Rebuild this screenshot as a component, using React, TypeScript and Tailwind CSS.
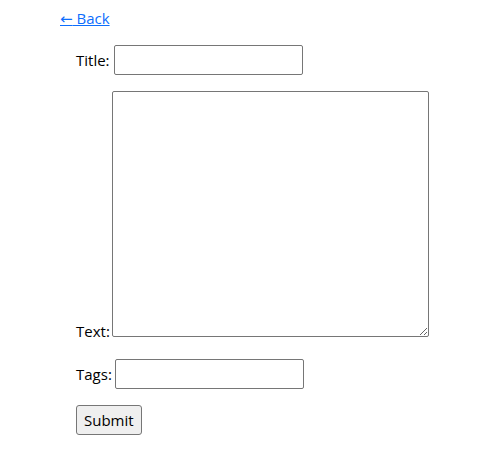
export default function App() {
  return (
    <div className="min-h-[469px] bg-white pl-[60px] pt-[7px] font-['Open_Sans','Segoe_UI',sans-serif] text-[15px] leading-[22px] text-black">
      <a href="#" className="text-[#0d6efd] underline">
        <span className="font-['DejaVu_Sans',sans-serif] text-[15px] leading-none">←</span> Back
      </a>

      <form className="mt-[16px] pl-[16px]" onSubmit={(e) => e.preventDefault()}>
        <div className="mb-[16px]">
          <label>Title:</label>{" "}
          <input
            type="text"
            className="ml-[1px] inline-block h-[30px] w-[189px] rounded-[2px] border border-[#767676] bg-white px-[2px] align-baseline"
          />
        </div>

        <div className="mb-[17px]">
          <label>Text:</label>{" "}
          <textarea className="-ml-[2px] inline-block h-[246px] w-[317px] resize rounded-[2px] border border-[#767676] bg-white align-baseline" />
        </div>

        <div className="mb-[16px]">
          <label>Tags:</label>{" "}
          <input
            type="text"
            className="-ml-[1px] inline-block h-[30px] w-[189px] rounded-[2px] border border-[#767676] bg-white px-[2px] align-baseline"
          />
        </div>

        <button
          type="submit"
          className="h-[30px] rounded-[3px] border border-[#767676] bg-[#efefef] px-[7px]"
        >
          Submit
        </button>
      </form>
    </div>
  );
}
